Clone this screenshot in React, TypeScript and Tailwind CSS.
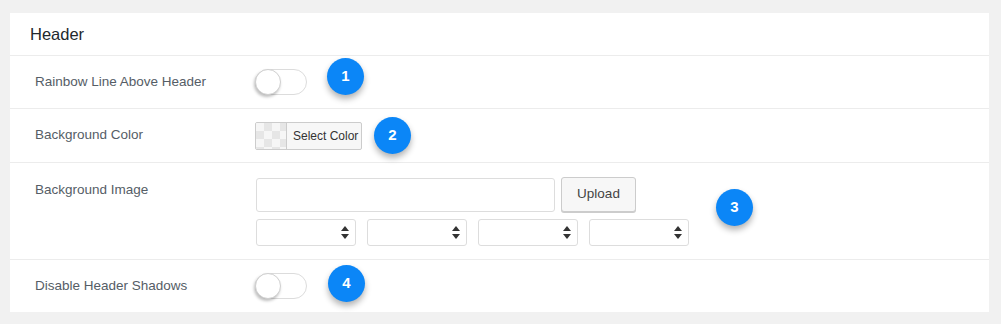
import React from 'react';

function Toggle() {
  return (
    <div className="relative h-[26px] w-[52px] rounded-full border border-[#dcdcdc] bg-white">
      <div className="absolute left-[-1px] top-[-1px] h-[26px] w-[26px] rounded-full border border-[#d0d0d0] bg-white shadow-[-1px_2px_3px_rgba(0,0,0,0.25)]" />
    </div>
  );
}

function Badge({ n, className }: { n: number; className: string }) {
  return (
    <div
      className={`absolute flex h-[37px] w-[37px] items-center justify-center rounded-full bg-[#0b86f7] text-[15px] font-bold text-white shadow-[0_4px_6px_rgba(0,0,0,0.3)] ${className}`}
    >
      {n}
    </div>
  );
}

function SelectBox() {
  return (
    <div className="flex h-[27px] w-[100px] items-center justify-end rounded-[3px] border border-[#dddddd] bg-white pr-[6px]">
      <svg width="8" height="13" viewBox="0 0 8 13">
        <path d="M4 0 L8 5 L0 5 Z" fill="#333" />
        <path d="M0 8 L8 8 L4 13 Z" fill="#333" />
      </svg>
    </div>
  );
}

function Checker() {
  return (
    <div
      className="h-full w-[31px] shrink-0 border-r border-[#cccccc] bg-[#f6f6f6]"
      style={{
        backgroundImage:
          'linear-gradient(45deg, #e6e6e6 25%, transparent 25%, transparent 75%, #e6e6e6 75%), linear-gradient(45deg, #e6e6e6 25%, transparent 25%, transparent 75%, #e6e6e6 75%)',
        backgroundSize: '16px 16px',
        backgroundPosition: '0 0, 8px 8px',
      }}
    />
  );
}

export default function App() {
  return (
    <div className="h-[324px] w-full bg-[#f1f1f1] pt-[13px] pl-[10px] font-['Liberation_Sans',Arial,sans-serif]">
      <div className="relative w-[979px] bg-white">
        <div className="flex h-[43px] items-center border-b border-[#ececec] pl-5 text-[16.5px] text-[#23282d]">
          Header
        </div>

        <div className="flex h-[53px] items-center border-b border-[#ececec] pl-[25px]">
          <div className="w-[220px] text-[13.5px] text-[#555d66]">Rainbow Line Above Header</div>
          <Toggle />
        </div>

        <div className="flex h-[54px] items-center border-b border-[#ececec] pl-[25px]">
          <div className="w-[220px] text-[13.5px] text-[#555d66]">Background Color</div>
          <div className="flex h-[28px] w-[107px] items-center overflow-hidden rounded-[2px] border border-[#cccccc] bg-[#f7f7f7]">
            <Checker />
            <span className="whitespace-nowrap pl-[6px] text-[12px] text-[#333]">Select Color</span>
          </div>
        </div>

        <div className="flex h-[97px] border-b border-[#ececec] pl-[25px] pt-[14px]">
          <div className="w-[220px] pt-[3px] text-[13.5px] text-[#555d66]">Background Image</div>
          <div className="flex flex-col gap-[7px]">
            <div className="flex items-center gap-[6px]">
              <div className="ml-px h-[34px] w-[299px] rounded-[3px] border border-[#dddddd] bg-white" />
              <div className="flex h-[35px] w-[75px] items-center justify-center rounded-[3px] border border-[#cccccc] bg-[#f7f7f7] text-[13.5px] text-[#444] shadow-[0_1px_0_#cccccc]">
                Upload
              </div>
            </div>
            <div className="ml-px flex gap-[11px]">
              <SelectBox />
              <SelectBox />
              <SelectBox />
              <SelectBox />
            </div>
          </div>
        </div>

        <div className="flex h-[52px] items-center pl-[25px]">
          <div className="w-[220px] text-[13.5px] text-[#555d66]">Disable Header Shadows</div>
          <Toggle />
        </div>

        <Badge n={1} className="left-[317px] top-[45px]" />
        <Badge n={2} className="left-[364px] top-[104px]" />
        <Badge n={3} className="left-[706px] top-[176px]" />
        <Badge n={4} className="left-[318px] top-[252px]" />
      </div>
    </div>
  );
}
